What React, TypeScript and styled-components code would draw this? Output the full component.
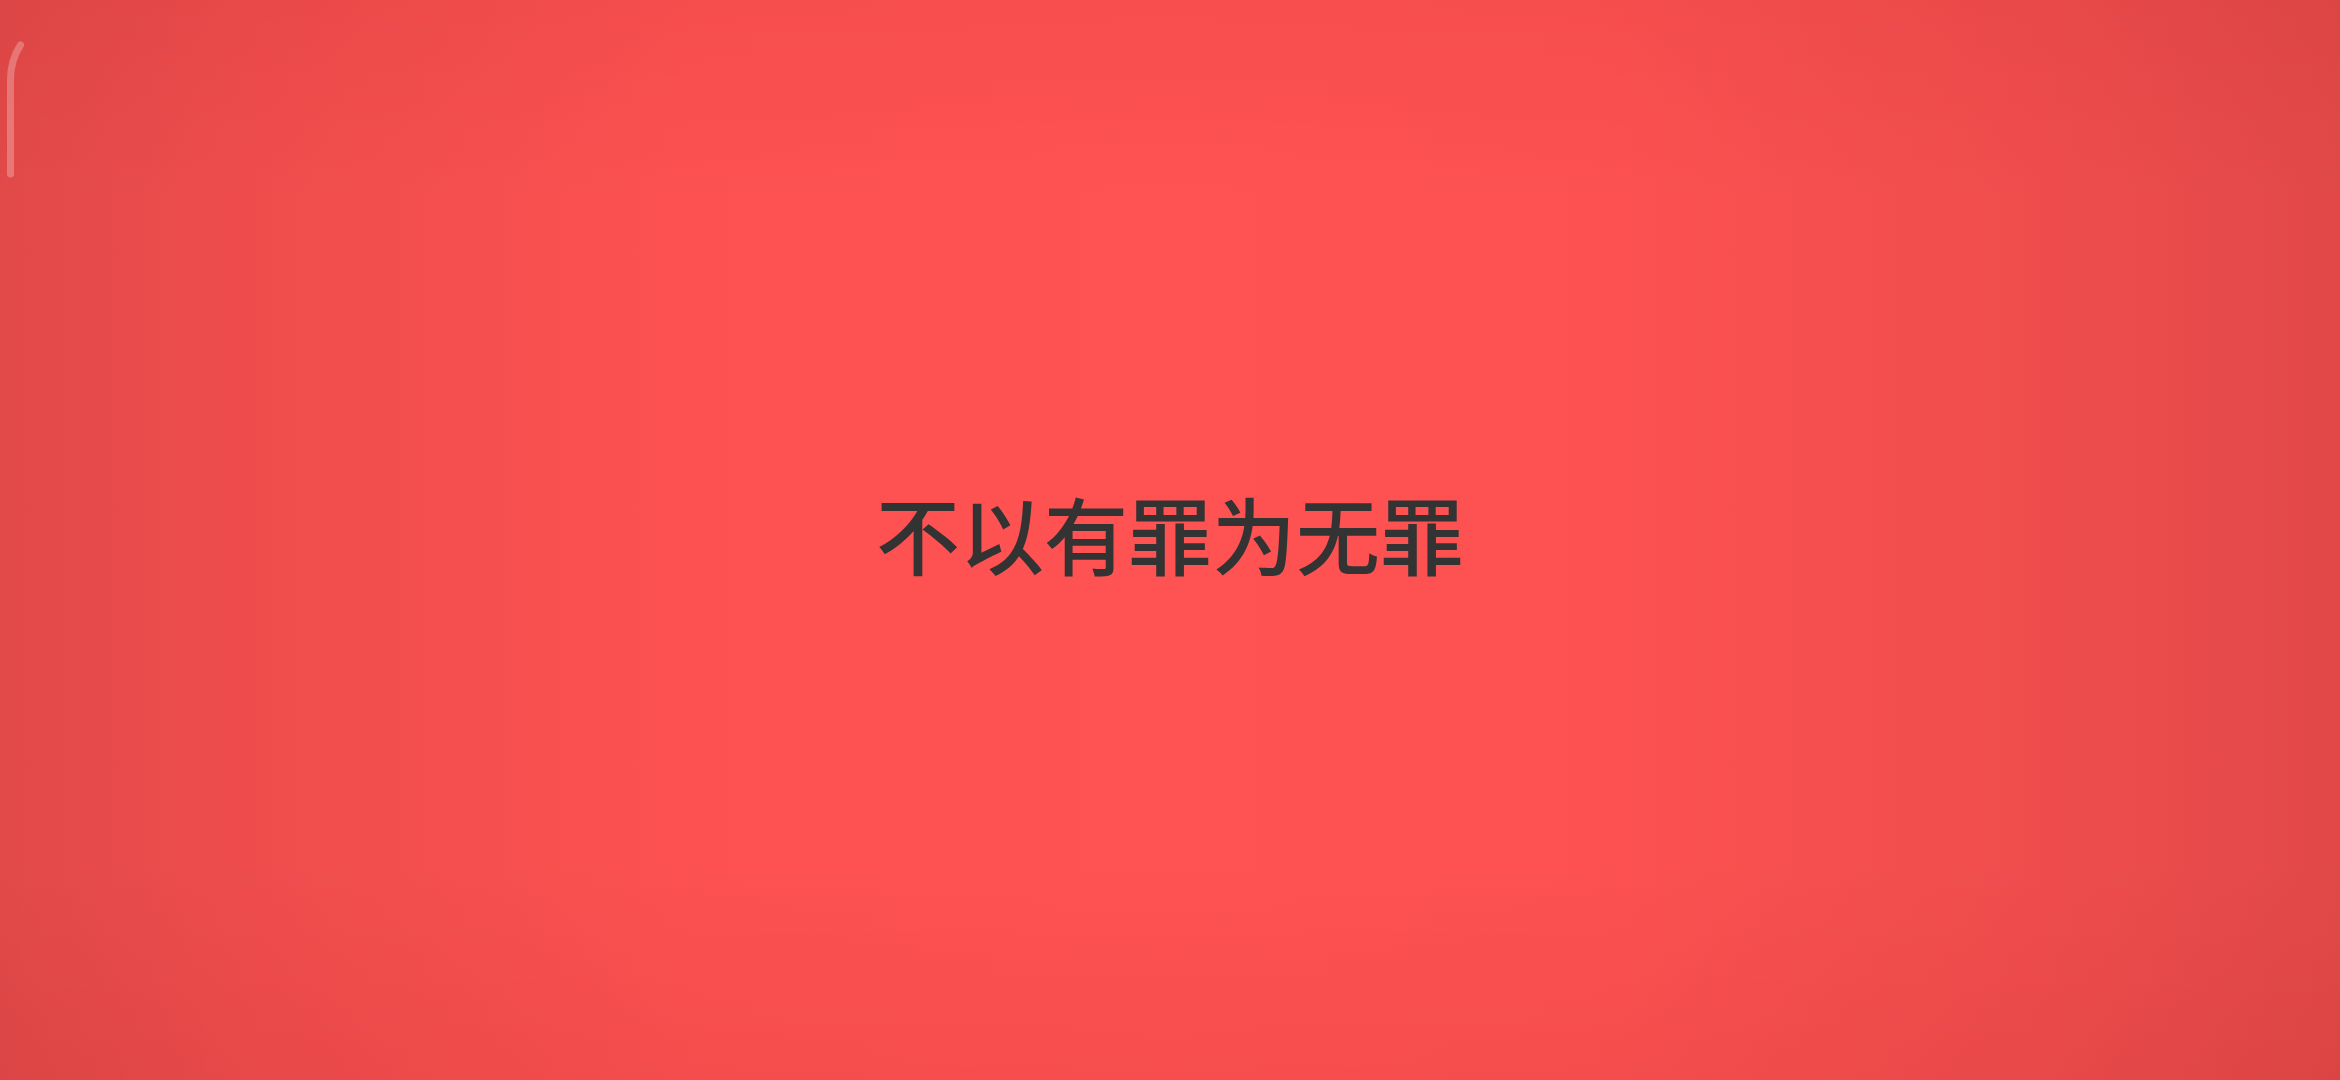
import React from "react";
import styled, { createGlobalStyle } from "styled-components";

const Global = createGlobalStyle`
  html, body {
    margin: 0;
    padding: 0;
    height: 100%;
    overflow: hidden;
  }
  #root {
    height: 100%;
  }
`;

const Screen = styled.div`
  position: relative;
  width: 100vw;
  height: 100vh;
  box-sizing: border-box;
  padding-bottom: 14px;
  display: flex;
  align-items: center;
  justify-content: center;
  background:
    linear-gradient(
      to bottom,
      rgba(120, 0, 0, 0.05) 0%,
      rgba(120, 0, 0, 0) 18%,
      rgba(120, 0, 0, 0) 80%,
      rgba(120, 0, 0, 0.06) 100%
    ),
    linear-gradient(
      to right,
      #e24949 0%,
      #f04d4d 12%,
      #fd5151 30%,
      #ff5252 50%,
      #fd5151 68%,
      #f04d4d 86%,
      #e24848 100%
    );
`;

const Quote = styled.h1`
  margin: 0;
  font-family: "Noto Sans CJK SC", "Noto Sans", sans-serif;
  font-weight: 500;
  font-size: 84px;
  line-height: 1;
  letter-spacing: 0;
  color: #333333;
`;

const EdgeMark = styled.svg`
  position: absolute;
  left: 0;
  top: 0;
  width: 40px;
  height: 200px;
`;

export default function App() {
  return (
    <>
      <Global />
      <Screen>
        <EdgeMark viewBox="0 0 40 200">
          <path
            d="M20.5 45 Q 10.5 60 10.5 80 L 10.5 174"
            fill="none"
            stroke="rgba(255,255,255,0.26)"
            strokeWidth="7"
            strokeLinecap="round"
          />
        </EdgeMark>
        <Quote>不以有罪为无罪</Quote>
      </Screen>
    </>
  );
}
